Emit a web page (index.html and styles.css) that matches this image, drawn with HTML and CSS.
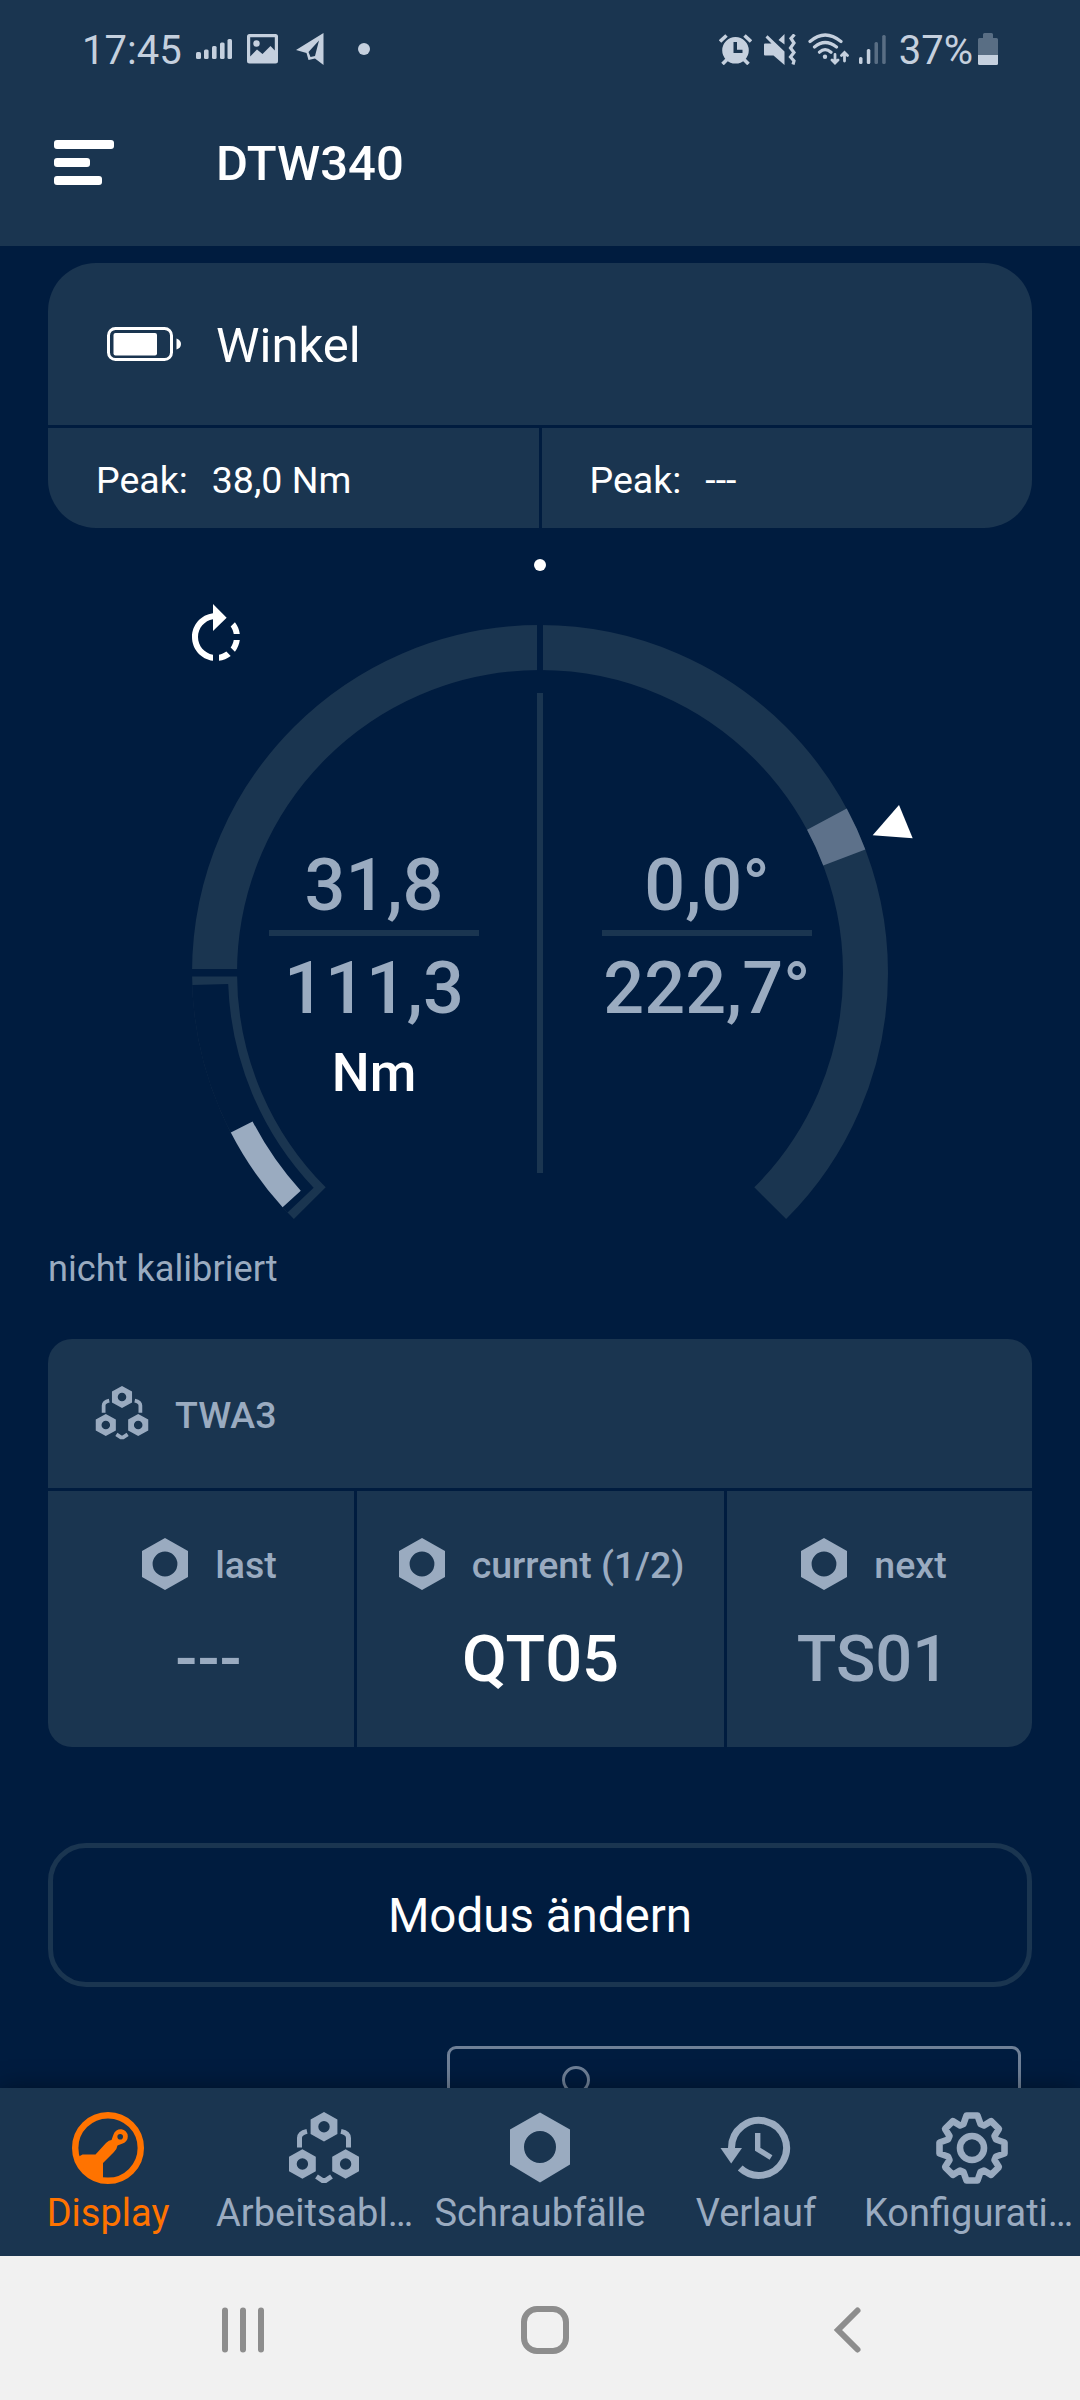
FILE: index.html
```html
<!DOCTYPE html>
<html lang="de">

<head>
    <meta charset="UTF-8">
    <meta name="viewport" content="width=device-width, initial-scale=1.0">
    <title>DTW340</title>
    <link rel="stylesheet" href="styles.css">
</head>

<body>
    <!-- shared icons -->
    <svg class="defs" width="0" height="0">
        <symbol id="nut" viewBox="0 0 46 52">
            <path fill-rule="evenodd" d="M23 0L46 13V39L23 52L0 39V13ZM23 13.6a12.4 12.4 0 1 0 0 24.8a12.4 12.4 0 1 0 0-24.8Z" />
        </symbol>
        <symbol id="flow" viewBox="0 0 72 72">
            <g fill-rule="evenodd">
                <path d="M36 0L49.4 7.4V22L36 29.4L22.600 22V7.400ZM36 9a5.700 5.700 0 1 0 0 11.400a5.700 5.700 0 1 0 0-11.400Z" />
                <path d="M14.400 37.300L27.800 44.700V59.300L14.400 66.700L1 59.300V44.700ZM14.400 46.300a5.700 5.700 0 1 0 0 11.400a5.700 5.700 0 1 0 0-11.400Z" />
                <path d="M57.600 37.300L71 44.700V59.300L57.600 66.700L44.200 59.300V44.700ZM57.600 46.300a5.700 5.700 0 1 0 0 11.400a5.700 5.700 0 1 0 0-11.400Z" />
            </g>
            <path fill="none" stroke="currentColor" stroke-width="5" d="M19 19.400Q11.500 21 11.500 26V35.500M53 19.400Q60.500 21 60.500 26V35.500M28.500 64.500L34.500 68.500H37.500L43.500 64.500" />
        </symbol>
    </svg>

    <div class="top">
        <div class="status">
            <div class="statusLeft">
                <span>17:45</span>
                <svg class="barsIcon" width="36" height="20" viewBox="0 0 36 20">
                    <rect y="13" width="5" height="7" rx="1.500" />
                    <rect x="8" y="10.500" width="4.600" height="9.500" rx="1.500" />
                    <rect x="16" y="7" width="4.600" height="13" rx="1.500" />
                    <rect x="24" y="3.500" width="4.600" height="16.500" rx="1.500" />
                    <rect x="31.500" width="4.500" height="20" rx="1.500" />
                </svg>
                <svg class="photoIcon" width="31" height="30" viewBox="0 0 31 30">
                    <path fill-rule="evenodd" d="M2.500 0H28.500A2.500 2.500 0 0 1 31 2.500V27A2.500 2.500 0 0 1 28.500 29.500H2.500A2.500 2.500 0 0 1 0 27V2.500A2.500 2.500 0 0 1 2.500 0ZM3.200 3.200V22.500L10 15.500L15.500 20L23.500 12L27.800 16.500V3.200Z" />
                    <circle cx="9.500" cy="9.500" r="3.200" />
                </svg>
                <svg class="sendIcon" width="28" height="32" viewBox="0 0 28 32">
                    <path fill-rule="evenodd" d="M27.500 0V32L19 25.500L12.500 27L10.500 20L0 17ZM23 7.500L12.500 19L14.500 24L19 23Z" />
                </svg>
                <span class="more"></span>
            </div>
            <div class="statusRight">
                <svg class="alarmIcon" width="33" height="31" viewBox="0 0 33 31">
                    <path fill-rule="evenodd" d="M16.500 3a13.300 13.300 0 1 0 0 26.600a13.300 13.300 0 1 0 0-26.600ZM14.500 8H18V15.800H23.500V19H14.500Z" />
                    <path fill="none" stroke="currentColor" stroke-width="3.600" d="M1 7.500L7.500 1.500M32 7.500L25.500 1.500M3.500 30L8 25.500M29.500 30L25 25.500" />
                </svg>
                <svg class="muteIcon" width="32" height="31" viewBox="0 0 32 31">
                    <path d="M0 10.500Q0 9.500 1 9.500H7.500L1.500 3.500L3.500 1.200L20.500 17.500V31L9.500 21.500H1Q0 21.500 0 20.500ZM20.500 0V10.500L14.500 6Z" />
                    <path fill="none" stroke="currentColor" stroke-width="3.200" d="M30.500 .5L27 4.500L30 9L26.500 14L30 18.500L26.500 23L30 27L29 30.500" />
                </svg>
                <svg class="wifiIcon" width="41" height="32" viewBox="0 0 41 32">
                    <g fill="none" stroke="currentColor" stroke-width="3.200" stroke-linecap="round">
                        <path d="M2 8.500Q17 -4.500 33 8.500M6.500 14Q17 5 28.500 14M11.500 19.200Q17 14 23 19.200" />
                        <path stroke-width="2.800" d="M27 21.500V29.500M24 27L27 30L30 27M36.500 28V20M33.500 22.500L36.500 19.500L39.500 22.500" />
                    </g>
                    <circle cx="17" cy="23.800" r="2.200" />
                </svg>
                <svg class="cellIcon" width="27" height="29" viewBox="0 0 27 29">
                    <rect y="22" width="3.500" height="7" rx="1.500" />
                    <rect x="7.800" y="14" width="3.500" height="15" rx="1.500" />
                    <rect class="dim" x="15.500" y="7" width="3.500" height="22" rx="1.500" />
                    <rect class="dim" x="23.200" width="3.500" height="29" rx="1.500" />
                </svg>
                <span>37%</span>
                <svg class="phoneBattery" width="20" height="32" viewBox="0 0 20 32">
                    <path class="dim" d="M5 1.500Q5 0 6.500 0H13.500Q15 0 15 1.500V5H18.500Q20 5 20 6.500V22H0V6.500Q0 5 1.500 5H5Z" />
                    <path d="M0 22H20V30.500Q20 32 18.500 32H1.500Q0 32 0 30.500Z" />
                </svg>
            </div>
        </div>
        <div class="appbar">
            <div class="menu">
                <span class="line"></span>
                <span class="line short"></span>
                <span class="line mid"></span>
            </div>
            <div class="title">DTW340</div>
        </div>
    </div>

    <div class="main">
        <div class="card tool">
            <div class="cell toolHead">
                <svg width="74" height="34" viewBox="0 0 74 34">
                    <rect x="1.500" y="1.500" width="63" height="31" rx="7" fill="none" stroke="currentColor" stroke-width="3" />
                    <rect x="6.500" y="6" width="43.500" height="22.500" rx="2" />
                    <path d="M69.500 11.500Q74 13 74 17T69.500 22.500Z" />
                </svg>
                <span>Winkel</span>
            </div>
            <div class="cell peak"><span>Peak:</span><span>38,0 Nm</span></div>
            <div class="cell peak"><span>Peak:</span><span>---</span></div>
        </div>
        <div class="pageDot"></div>

        <div class="gauge">
            <svg class="dial" width="1080" height="673" viewBox="-540 -402 1080 673">
                <path class="track" d="M-230.200 230.200A325.500 325.500 0 1 1 230.200 230.200" />
                <path class="hollow" d="M-329.800 11.500A330 330 0 0 0 -239.400 227.200" />
                <path class="level" d="M-298.300 154A335.750 335.750 0 0 0 -248.300 226" />
                <path class="target" d="M286.900 -153.800A325.500 325.500 0 0 1 304.300 -115.600" />
                <rect class="gap" x="-3" y="-350" width="6" height="50" />
                <rect class="gap" x="-350" y="-4" width="50" height="7.500" />
                <rect class="rule" x="-3" y="-280" width="6" height="480" />
                <path class="white" d="M332.700 -137.700L359 -168L372.700 -134.800Z" />
                <path class="white" transform="translate(-360 -372) scale(3)" d="M15.550 5.550L11 1v3.070C7.060 4.560 4 7.920 4 12s3.050 7.440 7 7.930v-2.020c-2.840-.48-5-2.940-5-5.910s2.160-5.430 5-5.910V10l4.550-4.450zM19.930 11c-.17-1.390-.72-2.730-1.620-3.890l-1.420 1.420c.54.75.88 1.600 1.020 2.470h2.020zM13 17.900v2.020c1.390-.17 2.740-.71 3.900-1.610l-1.440-1.440c-.75.540-1.590.89-2.460 1.030zm3.890-2.420l1.420 1.410c.9-1.160 1.450-2.500 1.620-3.890h-2.020c-.14.870-.48 1.720-1.020 2.480z" />
            </svg>
            <div class="values">
                <div class="value">
                    <span>31,8</span>
                    <hr>
                    <span>111,3</span>
                    <span class="unit">Nm</span>
                </div>
                <div class="value">
                    <span>0,0°</span>
                    <hr>
                    <span>222,7°</span>
                </div>
            </div>
        </div>
        <div class="calibration">nicht kalibriert</div>

        <div class="card workflow">
            <div class="cell workflowHead">
                <svg width="54" height="54"><use href="#flow" /></svg>
                <span>TWA3</span>
            </div>
            <div class="cell step last">
                <div class="stepName"><svg width="46" height="52"><use href="#nut" /></svg><span>last</span></div>
                <div class="stepValue">---</div>
            </div>
            <div class="cell step current">
                <div class="stepName"><svg width="46" height="52"><use href="#nut" /></svg><span>current (1/2)</span></div>
                <div class="stepValue">QT05</div>
            </div>
            <div class="cell step next">
                <div class="stepName"><svg width="46" height="52"><use href="#nut" /></svg><span>next</span></div>
                <div class="stepValue">TS01</div>
            </div>
        </div>

        <button class="modeBtn">Modus ändern</button>

        <div class="preview">
            <span class="ring"></span>
        </div>
    </div>

    <div class="tabs">
        <div class="tab active">
            <svg width="72" height="72" viewBox="0 0 72 72">
                <circle cx="36" cy="36" r="32.800" fill="none" stroke="currentColor" stroke-width="6.400" />
                <path fill-rule="evenodd" d="M6 45L10.500 42.500H23.500L34 31Q37 28 39.500 28L41.500 22.500A7.300 7.300 0 1 1 50 31.700L45.500 33.500Q45 37 42 40L31 51V66L27 69L14 62ZM48.200 21.900a2.800 2.800 0 1 0 0 5.600a2.800 2.800 0 1 0 0-5.600Z" />
            </svg>
            <span>Display</span>
        </div>
        <div class="tab long">
            <svg width="72" height="72"><use href="#flow" /></svg>
            <span>Arbeitsabl…</span>
        </div>
        <div class="tab">
            <svg width="72" height="72" viewBox="0 0 72 72">
                <path fill-rule="evenodd" d="M36 .5L66 17.500V52.500L36 70.500L6 52.500V17.500ZM36 19a16 16 0 1 0 0 32a16 16 0 1 0 0-32Z" />
            </svg>
            <span>Schraubfälle</span>
        </div>
        <div class="tab">
            <svg width="72" height="72" viewBox="0 0 72 72">
                <path fill="none" stroke="currentColor" stroke-width="7" d="M11.500 38V36A27.500 27.500 0 1 1 20.200 56" />
                <path d="M.5 36H22L11.200 51.500Z" />
                <path fill="none" stroke="currentColor" stroke-width="5.400" d="M37.700 21V37.300L51 45.500" />
            </svg>
            <span>Verlauf</span>
        </div>
        <div class="tab long">
            <svg width="72" height="72" viewBox="-36 -36 72 72">
                <g fill="none" stroke="currentColor" stroke-width="6.600" stroke-linejoin="round">
                    <path d="M-5.500 -32.500H5.500L8.500 -24L12 -22.500L19.100 -26.900L26.900 -19.100L22.500 -12L24 -8.500L32.500 -5.500V5.500L24 8.500L22.500 12L26.900 19.100L19.100 26.900L12 22.500L8.500 24L5.500 32.500H-5.500L-8.500 24L-12 22.500L-19.100 26.900L-26.900 19.100L-22.500 12L-24 8.500L-32.500 5.500V-5.500L-24 -8.500L-22.500 -12L-26.900 -19.100L-19.100 -26.900L-12 -22.500L-8.500 -24Z" />
                    <circle r="12" />
                </g>
            </svg>
            <span>Konfigurati…</span>
        </div>
    </div>

    <div class="system">
        <svg width="1080" height="144" viewBox="0 0 1080 144">
            <g fill="none" stroke="currentColor" stroke-width="6" stroke-linecap="round">
                <path d="M225 54.500V93.500M243 54.500V93.500M261 54.500V93.500" />
                <rect x="524" y="53" width="42" height="42" rx="13" />
                <path d="M857.500 54.500L838 74L857.500 93.500" />
            </g>
        </svg>
    </div>
</body>

</html>
```

FILE: styles.css
```css
* {
    box-sizing: border-box;
}

body {
    margin: 0;
    width: 1080px;
    height: 2400px;
    display: flex;
    flex-direction: column;
    background-color: #001c3f;
    color: white;
    font-family: Roboto, "Liberation Sans", sans-serif;
    overflow: hidden;
}

svg {
    display: block;
    flex-shrink: 0;
    fill: currentColor;
}

.defs {
    position: absolute;
}

span {
    white-space: nowrap;
}

/* status bar + title */
.top {
    height: 246px;
    flex-shrink: 0;
    background-color: #1a3550;
}

.status {
    height: 98px;
    display: flex;
    justify-content: space-between;
    align-items: center;
    padding: 0 82px 0 82px;
    font-size: 40px;
    color: #c5d0de;
}

.statusLeft,
.statusRight {
    display: flex;
    align-items: center;
}

.status span {
    padding-top: 2px;
}

.barsIcon {
    margin-left: 14px;
}

.photoIcon {
    margin-left: 15px;
}

.sendIcon {
    margin-left: 18px;
}

.more {
    width: 12px;
    height: 12px;
    margin-left: 34px;
    border-radius: 50%;
    background-color: #c5d0de;
}

.muteIcon,
.wifiIcon {
    margin-left: 12px;
}

.cellIcon {
    margin: 0 13px 0 10px;
}

.phoneBattery {
    margin-left: 5px;
}

.dim {
    opacity: 0.37;
}

.appbar {
    height: 130px;
    display: flex;
    align-items: center;
    padding: 0 0 2px 54px;
}

.menu {
    width: 162px;
    display: flex;
    flex-direction: column;
    gap: 9px;
}

.line {
    width: 60px;
    height: 9px;
    border-radius: 3px;
    background-color: white;
}

.line.short {
    width: 36px;
}

.line.mid {
    width: 48px;
}

.title {
    padding-top: 3px;
    font-size: 49px;
    font-weight: 500;
}

/* content */
.main {
    flex: 1;
    display: flex;
    flex-direction: column;
    padding: 17px 48px 0;
    overflow: hidden;
}

.card {
    display: grid;
    gap: 3px;
    overflow: hidden;
    flex-shrink: 0;
}

.cell {
    background-color: #1a3550;
}

.tool {
    grid-template-columns: 1fr 1fr;
    grid-template-rows: 162px 100px;
    border-radius: 48px;
}

.toolHead {
    grid-column: 1 / -1;
    display: flex;
    align-items: center;
    gap: 35px;
    padding-left: 59px;
    font-size: 49px;
}

.toolHead span {
    padding-top: 3px;
}

.peak {
    display: flex;
    align-items: center;
    gap: 24px;
    padding: 3px 0 0 48px;
    font-size: 37.5px;
}

.pageDot {
    width: 12px;
    height: 12px;
    margin: 31px auto 0;
    border-radius: 50%;
    background-color: white;
    flex-shrink: 0;
}

/* gauge, the numbers share the grid cell with the dial */
.gauge {
    height: 673px;
    margin: 0 -48px;
    display: grid;
    flex-shrink: 0;
}

.dial,
.values {
    grid-area: 1 / 1;
}

.dial path {
    fill: none;
}

.track {
    stroke: #1a3550;
    stroke-width: 45;
}

.hollow {
    stroke: #001c3f;
    stroke-width: 36;
}

.level {
    stroke: #9aabc0;
    stroke-width: 24.5;
}

.target {
    stroke: #5d718a;
    stroke-width: 45;
}

.gap {
    fill: #001c3f;
}

.rule {
    fill: #1a3550;
}

.dial .white {
    fill: white;
}

.values {
    display: flex;
    gap: 123px;
    padding: 275px 0 0 269px;
}

.value {
    width: 210px;
    display: flex;
    flex-direction: column;
    align-items: center;
    font-size: 72px;
    font-weight: 500;
    line-height: 80px;
    color: #9aabc0;
}

.value hr {
    width: 210px;
    height: 6px;
    margin: 4px 0 13px;
    border: none;
    background-color: #1a3550;
}

.value .unit {
    margin-top: 14px;
    font-size: 53.5px;
    line-height: 60px;
    color: white;
}

.calibration {
    padding-top: 1px;
    font-size: 36.2px;
    line-height: 48px;
    color: #9aabc0;
}

/* workflow */
.workflow {
    grid-template-columns: 306px 367px 305px;
    grid-template-rows: 149px 256px;
    margin-top: 46px;
    border-radius: 24px;
    color: #9aabc0;
}

.workflowHead {
    grid-column: 1 / -1;
    display: flex;
    align-items: center;
    gap: 26px;
    padding: 0 0 2px 47px;
    font-size: 37.5px;
    font-weight: 500;
}

.workflowHead span {
    padding-top: 5px;
}

.step {
    display: flex;
    flex-direction: column;
    align-items: center;
    padding-top: 43px;
    font-weight: 500;
}

.step.last {
    padding-left: 15px;
}

.step.next {
    padding-right: 13px;
}

.stepName {
    display: flex;
    align-items: center;
    gap: 27px;
    padding-left: 2px;
    font-size: 37.5px;
    line-height: 56px;
}

.stepName span {
    padding-top: 3px;
}

.stepValue {
    margin-top: 28px;
    font-size: 65px;
    line-height: 76px;
}

.current .stepValue {
    color: white;
}

.modeBtn {
    height: 144px;
    margin-top: 96px;
    padding-top: 3px;
    flex-shrink: 0;
    border: 5px solid #1a3550;
    border-radius: 38px;
    background: none;
    color: white;
    font-family: inherit;
    font-size: 47.5px;
}

.preview {
    width: 574px;
    height: 120px;
    margin: 59px 0 0 399px;
    padding: 17px 0 0 112px;
    flex-shrink: 0;
    border: 3px solid #6f8097;
    border-radius: 9px;
}

.ring {
    display: block;
    width: 28px;
    height: 28px;
    border: 3px solid #6f8097;
    border-radius: 50%;
}

/* bottom tabs */
.tabs {
    position: relative;
    height: 168px;
    display: flex;
    flex-shrink: 0;
    background-color: #1a3550;
    box-shadow: 0 0 24px rgba(0, 0, 0, 0.4);
}

.tab {
    width: 216px;
    display: flex;
    flex-direction: column;
    align-items: center;
    padding-top: 24px;
    font-size: 38px;
    line-height: 44px;
    color: #9aabc0;
}

.tab span {
    margin-top: 7px;
}

.tab.long span {
    align-self: flex-start;
}

.tab.active {
    color: #ff7300;
}

.system {
    position: relative;
    height: 144px;
    flex-shrink: 0;
    background-color: #f1f1f1;
    color: #8d8d8d;
}
```
